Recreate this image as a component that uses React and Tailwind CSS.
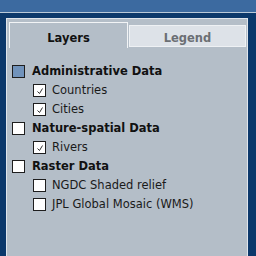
import React from "react";

function Box({ checked, filled }) {
  return (
    <div
      className={`w-[13px] h-[13px] shrink-0 border border-[#1e1e1e] ${
        filled ? "bg-[#7193bb]" : "bg-white"
      } relative`}
    >
      {checked && (
        <svg width="11" height="11" viewBox="0 0 11 11" className="absolute left-0 top-0">
          <path d="M3.5 6.5 L5.5 8.5 L8.5 3.5" fill="none" stroke="#333" strokeWidth="1" />
        </svg>
      )}
    </div>
  );
}

function Heading({ label, filled }) {
  return (
    <div className="h-[19px] flex items-center pl-[3px] gap-[7px]">
      <Box filled={filled} />
      <span className="font-bold text-[11.5px] text-[#111] leading-none">{label}</span>
    </div>
  );
}

function Item({ label, checked }) {
  return (
    <div className="h-[19px] flex items-center pl-[24px] gap-[6px]">
      <Box checked={checked} />
      <span className="text-[11.5px] text-[#1a1a1a] leading-none">{label}</span>
    </div>
  );
}

export default function App() {
  return (
    <div
      className="w-[256px] h-[256px] bg-[#0b386b] flex flex-col overflow-hidden"
      style={{ fontFamily: '"DejaVu Sans", Verdana, sans-serif' }}
    >
      <div className="h-[13px] shrink-0 bg-[#3c6aa0] border-b border-[#b9c9d9]" />
      <div className="flex-1 flex pt-[5px] pl-[6px] pr-[8px]">
        <div className="flex-1 bg-[#b4bec8] border-l border-t border-r border-[#dfe5ec] flex flex-col pt-[3px] pl-[2px] pr-[1px]">
          <div className="flex items-start h-[26px]">
            <div className="w-[119px] h-[26px] border-l border-t border-r border-[#f2f4f6] flex justify-center pt-[10px] font-bold text-[11.5px] leading-none text-[#111]">
              Layers
            </div>
            <div className="ml-[1px] mt-[3px] flex-1 h-[22px] bg-[#dde2e8] border border-[#eef1f4] flex justify-center pt-[7px] font-bold text-[11.5px] leading-none text-[#6b6f74]">
              Legend
            </div>
          </div>
          <div className="mt-[14px] flex flex-col">
            <Heading label="Administrative Data" filled />
            <Item label="Countries" checked />
            <Item label="Cities" checked />
            <Heading label="Nature-spatial Data" />
            <Item label="Rivers" checked />
            <Heading label="Raster Data" />
            <Item label="NGDC Shaded relief" />
            <Item label="JPL Global Mosaic (WMS)" />
          </div>
        </div>
      </div>
    </div>
  );
}
